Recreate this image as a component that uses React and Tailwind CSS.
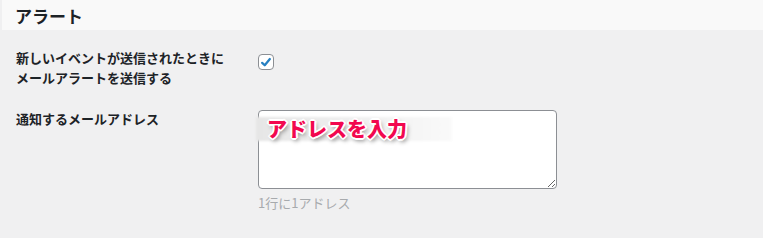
import React from 'react';

const font = "font-['Noto_Sans_CJK_JP','Noto_Sans',sans-serif]";

const App = () => {
  return (
    <div className={`w-[763px] h-[238px] bg-[#f0f0f1] ${font} overflow-hidden`}>
      <div className="ml-[2px] h-[30px] bg-[#f9f9f9] pl-[13px] flex items-center">
        <h2 className="text-[17px] font-semibold text-[#1d2327] leading-none">アラート</h2>
      </div>

      <div className="pl-4 pt-[18px] grid grid-cols-[242px_1fr] text-[13px] text-[#1d2327]">
        <div className="font-semibold leading-[20px]">
          新しいイベントが送信されたときに
          <br />
          メールアラートを送信する
        </div>
        <div className="pt-[6px]">
          <span className="block w-4 h-4 rounded-[4px] border border-[#8c8f94] bg-white flex items-center justify-center">
            <svg viewBox="0 0 20 20" className="w-[15px] h-[15px]">
              <path d="M4.5 10.5 L8.2 14 L15.5 5" fill="none" stroke="#2680c2" strokeWidth="3.2" strokeLinecap="round" strokeLinejoin="round" />
            </svg>
          </span>
        </div>

        <div className="font-semibold leading-[20px] pt-[21px]">通知するメールアドレス</div>
        <div className="pt-[22px]">
          <div className="relative w-[299px]">
            <textarea
              className="block w-[299px] h-[79px] rounded-[4px] border border-[#8c8f94] bg-white resize-y outline-none"
              defaultValue=""
            />
            <div className="absolute left-[-2px] top-[7px] w-[196px] h-[24px] bg-gradient-to-r from-[#e6e6e6] via-[#efefef] to-[#fafafa] blur-[1px]" />
            <div className="absolute left-[9px] top-[6px] text-[20px] font-black leading-[26px] text-[#f2084f] [text-shadow:0_0_1px_#fff,1px_1px_0_#fff,-1px_-1px_0_#fff,1px_-1px_0_#fff,-1px_1px_0_#fff,2px_0_0_#fff,-2px_0_0_#fff,0_2px_0_#fff,0_-2px_0_#fff,2px_3px_4px_rgba(0,0,0,0.45)]">
              アドレスを入力
            </div>
          </div>
          <p className="mt-[5px] text-[13px] leading-[18px] text-[#a7aaad]">1行に1アドレス</p>
        </div>
      </div>
    </div>
  );
};

export default App;
